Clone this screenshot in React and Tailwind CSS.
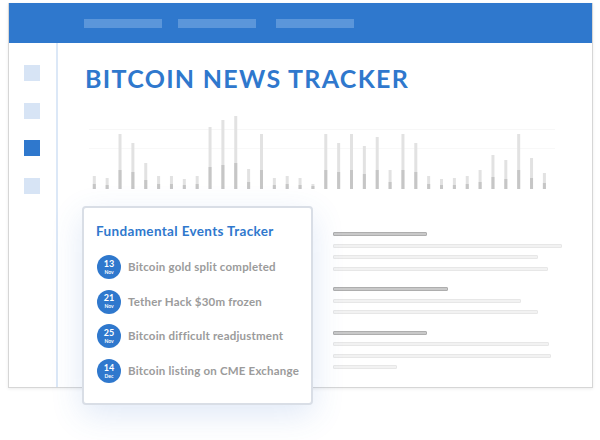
import React from "react";

const bars = [
  [13, 5], [11, 4], [55, 19], [46, 17], [26, 9], [13, 5], [13, 5], [10, 4], [13, 5],
  [62, 22], [69, 24], [73, 26], [20, 7], [55, 19], [11, 4], [13, 5], [11, 4], [5, 3],
  [55, 19], [46, 17], [55, 19], [43, 15], [52, 19], [19, 7], [55, 19], [46, 17], [13, 5],
  [10, 4], [11, 4], [13, 5], [19, 7], [34, 12], [29, 10], [55, 19], [31, 11], [16, 6],
];

const events = [
  ["13", "Nov", "Bitcoin gold split completed"],
  ["21", "Nov", "Tether Hack $30m frozen"],
  ["25", "Nov", "Bitcoin difficult readjustment"],
  ["14", "Dec", "Bitcoin listing on CME Exchange"],
];

const groups = [
  [94, [229, 205, 215]],
  [115, [188, 205]],
  [94, [216, 218, 64]],
];

function Chart() {
  const base = 81;
  return (
    <svg width="470" height="84" viewBox="0 0 470 84" className="block">
      <line x1="0" x2="466" y1="21.5" y2="21.5" stroke="#f7f7f7" strokeWidth="1" />
      <line x1="0" x2="466" y1="40.5" y2="40.5" stroke="#f8f8f8" strokeWidth="1" />
      {bars.map(([h, d], i) => {
        const x = 5.3 + i * 12.86 - 1.5;
        return (
          <g key={i}>
            <rect x={x} y={base - h} width="3" height={h} fill="#e2e2e2" />
            <rect x={x} y={base - d} width="3" height={d} fill="#c6c6c6" />
          </g>
        );
      })}
    </svg>
  );
}

export default function App() {
  return (
    <div className="w-[600px] h-[440px] bg-white relative overflow-hidden font-['Lato',sans-serif]">
      <div className="pt-[3px] pl-[8px]">
        <div className="w-[585px] h-[385px] border border-[#d6d6d6] border-t-0 shadow-[0_1px_3px_rgba(0,0,0,0.08)] flex flex-col bg-white">
          <div className="h-[40px] bg-[#2f78cd] flex items-center pl-[75px]">
            <div className="w-[78px] h-[9px] bg-[#5b96da]" />
            <div className="w-[78px] h-[9px] bg-[#5b96da] ml-[16px]" />
            <div className="w-[78px] h-[9px] bg-[#5b96da] ml-[20px]" />
          </div>
          <div className="flex flex-1">
            <div className="w-[49px] border-r-2 border-[#dce8f7] flex flex-col gap-[21.5px] pt-[22px] pl-[15px]">
              <div className="w-[16px] h-[16px] bg-[#d7e4f5]" />
              <div className="w-[16px] h-[16px] bg-[#d7e4f5]" />
              <div className="w-[16px] h-[16px] bg-[#2f78cd]" />
              <div className="w-[16px] h-[16px] bg-[#d7e4f5]" />
            </div>
            <div className="flex-1 flex flex-col">
              <div className="mt-[23px] ml-[27px] text-[25px] leading-[25px] font-bold text-[#2f78cd] tracking-[1.3px]">
                BITCOIN NEWS TRACKER
              </div>
              <div className="mt-[17px] ml-[31px]">
                <Chart />
              </div>
              <div className="mt-[40px] ml-[275px] flex flex-col gap-[16.5px]">
                {groups.map(([hw, lines], gi) => (
                  <div key={gi} className="flex flex-col gap-[7.5px]">
                    <div className="h-[4px] border border-[#aeaeae] bg-[#c9c9c9] rounded-[1px]" style={{ width: hw }} />
                    {lines.map((w, li) => (
                      <div key={li} className="h-[4px] border border-[#e7e7e7] bg-[#f2f2f2] rounded-[1px]" style={{ width: w }} />
                    ))}
                  </div>
                ))}
              </div>
            </div>
          </div>
        </div>
      </div>

      <div className="absolute left-[82px] top-[206px] w-[231px] h-[199px] bg-white border-2 border-[#d9dee6] rounded-[4px] shadow-[0_10px_32px_rgba(60,120,205,0.16)] pt-[15px] pl-[12px]">
        <div className="text-[13.5px] leading-[16px] font-bold text-[#2f78cd] tracking-[0.35px]">
          Fundamental Events Tracker
        </div>
        <div className="mt-[16px] flex flex-col gap-[10.7px] pl-[1px]">
          {events.map(([day, mon, text], i) => (
            <div key={i} className="flex items-center">
              <div className="w-[24px] h-[24px] rounded-full bg-[#2f78cd] text-white flex flex-col items-center justify-center">
                <div className="text-[9px] leading-[8px] font-bold">{day}</div>
                <div className="text-[5px] leading-[6px] font-bold mt-[1px]">{mon}</div>
              </div>
              <div className="ml-[7px] text-[11.5px] leading-[14px] font-bold text-[#9b9b9b] tracking-[0.2px]">{text}</div>
            </div>
          ))}
        </div>
      </div>
    </div>
  );
}
